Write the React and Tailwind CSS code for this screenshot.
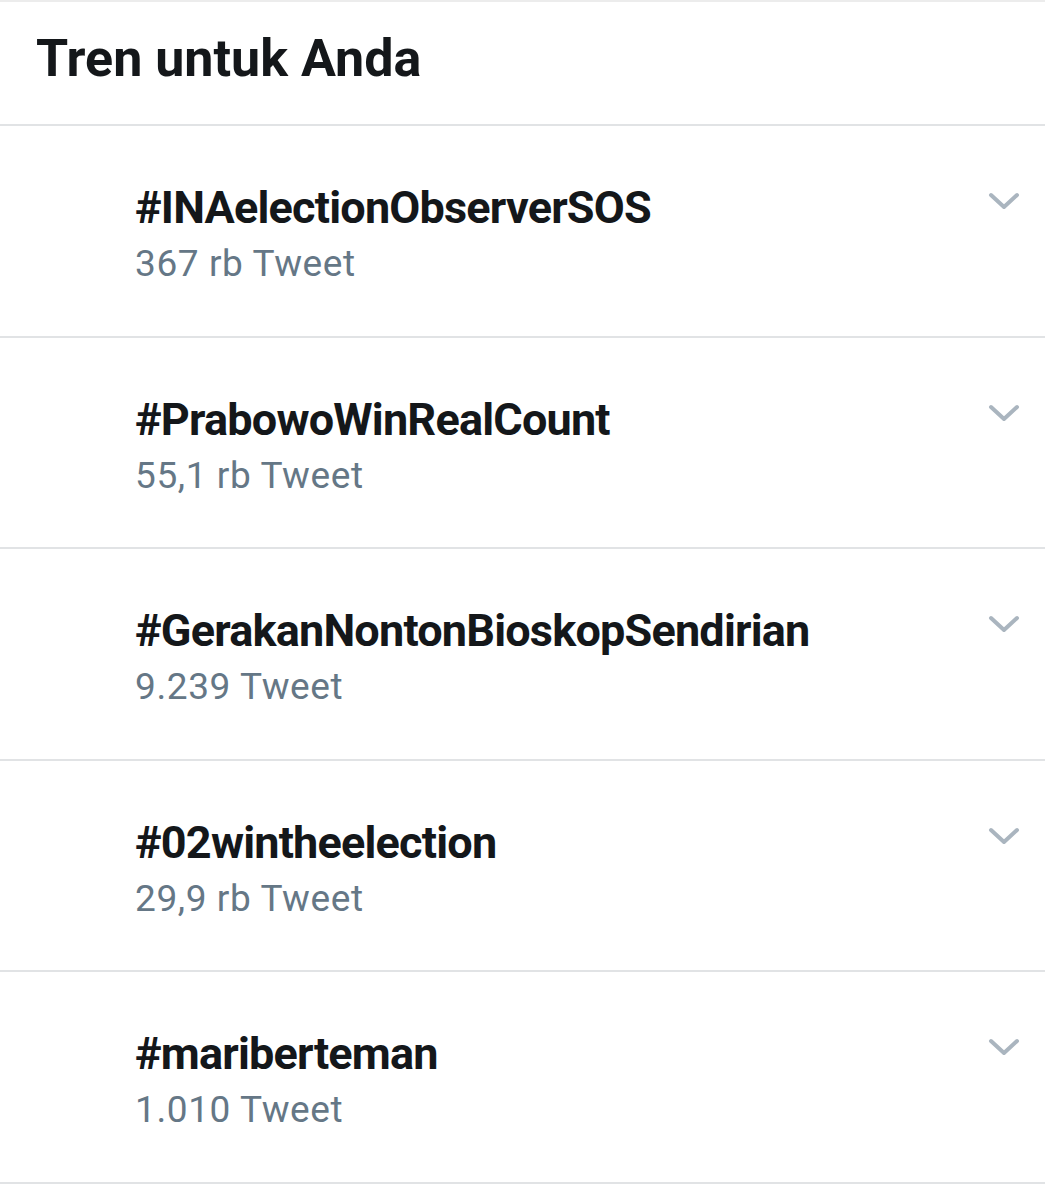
const trends = [
  { tag: '#INAelectionObserverSOS', count: '367 rb Tweet', h: 'h-[212px]' },
  { tag: '#PrabowoWinRealCount', count: '55,1 rb Tweet', h: 'h-[211px]' },
  { tag: '#GerakanNontonBioskopSendirian', count: '9.239 Tweet', h: 'h-[212px]' },
  { tag: '#02wintheelection', count: '29,9 rb Tweet', h: 'h-[211px]' },
  { tag: '#mariberteman', count: '1.010 Tweet', h: 'h-[212px]' },
];

const Chevron = () => (
  <svg width="32" height="20" viewBox="0 0 32 20" fill="none">
    <path d="M3 4 L16 16 L29 4" stroke="#aab5bf" strokeWidth="4" strokeLinecap="round" strokeLinejoin="round" />
  </svg>
);

export default function App() {
  return (
    <div className="min-h-screen bg-white font-['Roboto',sans-serif]">
      {/* Header */}
      <div className="border-t-2 border-[#ececec] border-b-2 border-b-[#e1e3e5] h-[126px] pl-[36px] pt-[25px]">
        <h1 className="text-[52px] leading-[64px] font-bold text-[#14171a]">Tren untuk Anda</h1>
      </div>

      {/* Trend list */}
      {trends.map((t) => (
        <div key={t.tag} className={`${t.h} border-b-2 border-[#e1e3e5] flex items-start justify-between pl-[135px] pr-[25px]`}>
          <div className="pt-[54px]">
            <p className="text-[45px] leading-[56px] font-bold tracking-[-0.8px] text-[#14171a]">{t.tag}</p>
            <p className="mt-[6px] text-[37px] leading-[44px] tracking-[0.6px] text-[#657786]">{t.count}</p>
          </div>
          <div className="pt-[65px]">
            <Chevron />
          </div>
        </div>
      ))}
    </div>
  );
}
